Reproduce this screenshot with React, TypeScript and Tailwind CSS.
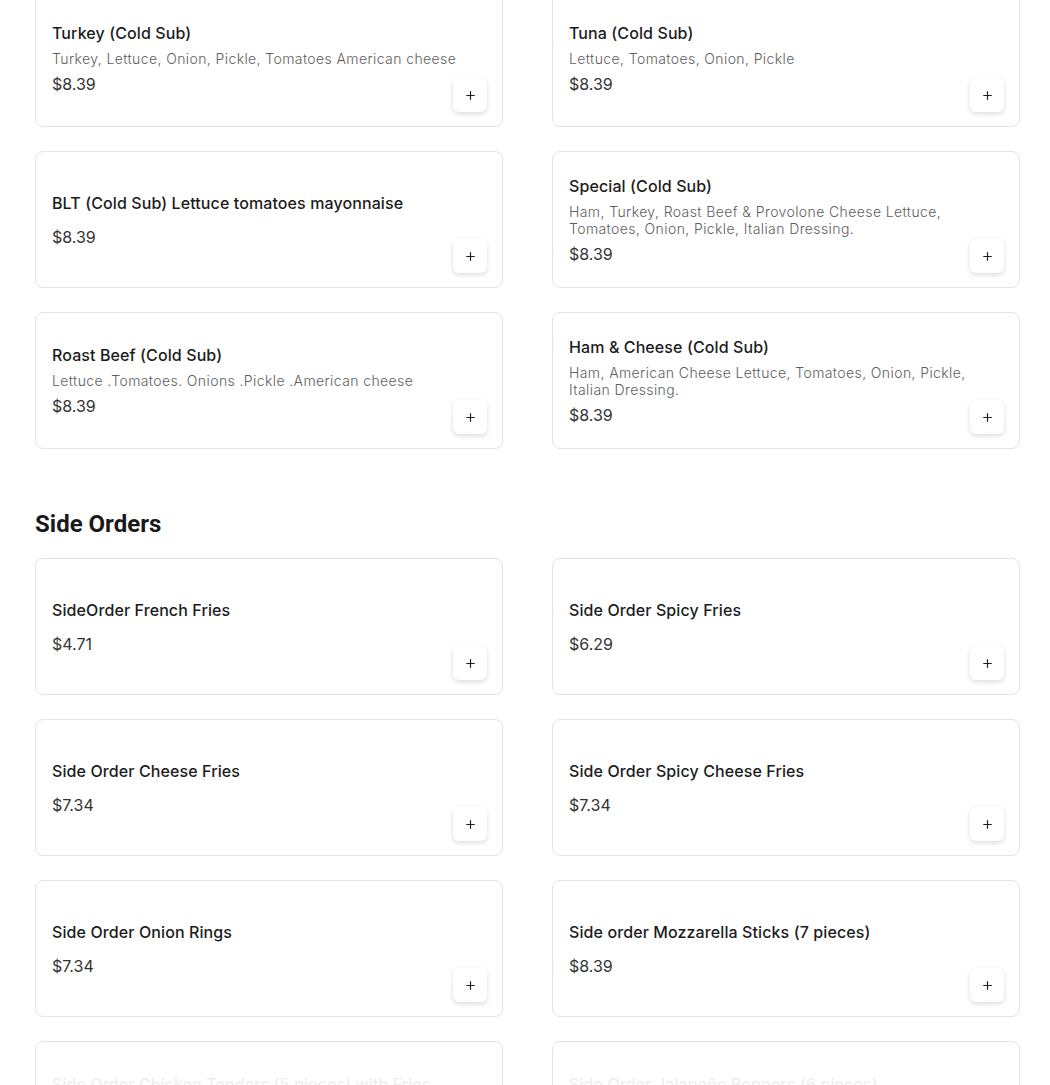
import { Plus } from 'lucide-react';

interface MenuItem {
  name: string;
  description?: string;
  price: string;
}

const subs: MenuItem[] = [
  { name: 'Turkey (Cold Sub)', description: 'Turkey, Lettuce, Onion, Pickle, Tomatoes American cheese', price: '$8.39' },
  { name: 'Tuna (Cold Sub)', description: 'Lettuce, Tomatoes, Onion, Pickle', price: '$8.39' },
  { name: 'BLT (Cold Sub) Lettuce tomatoes mayonnaise', price: '$8.39' },
  {
    name: 'Special (Cold Sub)',
    description: 'Ham, Turkey, Roast Beef & Provolone Cheese Lettuce, Tomatoes, Onion, Pickle, Italian Dressing.',
    price: '$8.39'
  },
  { name: 'Roast Beef (Cold Sub)', description: 'Lettuce .Tomatoes. Onions .Pickle .American cheese', price: '$8.39' },
  {
    name: 'Ham & Cheese (Cold Sub)',
    description: 'Ham, American Cheese Lettuce, Tomatoes, Onion, Pickle, Italian Dressing.',
    price: '$8.39'
  }
];

const sides: MenuItem[] = [
  { name: 'SideOrder French Fries', price: '$4.71' },
  { name: 'Side Order Spicy Fries', price: '$6.29' },
  { name: 'Side Order Cheese Fries', price: '$7.34' },
  { name: 'Side Order Spicy Cheese Fries', price: '$7.34' },
  { name: 'Side Order Onion Rings', price: '$7.34' },
  { name: 'Side order Mozzarella Sticks (7 pieces)', price: '$8.39' },
  { name: 'Side Order Chicken Tenders (5 pieces) with Fries', description: 'Served with your choice of sauce', price: '$9.44' },
  { name: 'Side Order Jalapeño Poppers (6 pieces)', description: 'Served with ranch dressing', price: '$8.39' }
];

function ItemCard({ item, faded }: { item: MenuItem; faded?: boolean }) {
  return (
    <div className="relative flex min-h-[137px] rounded-lg border border-[#e4e4e4] bg-white p-4">
      <div className={`flex flex-1 flex-col justify-center gap-[5px] ${faded ? 'opacity-[0.07]' : ''}`}>
        <div className="text-[16px] leading-6 font-medium tracking-[0.1px] text-[#1c1c1c]">{item.name}</div>
        <div className="text-[14px] leading-[17px] font-light tracking-[0.4px] text-[#5e5e5e]">{item.description}</div>
        <div className="text-[16px] leading-6 text-[#333333]">{item.price}</div>
      </div>
      {/* add-to-cart button sits over the card corner */}
      <button className="absolute right-[15px] bottom-[14px] flex h-[34px] w-[34px] items-center justify-center rounded-md bg-white shadow-[0_2px_5px_rgba(0,0,0,0.14)]">
        <Plus className="h-[13px] w-[13px] text-[#222]" strokeWidth={2.2} />
      </button>
    </div>
  );
}

export default function App() {
  return (
    <div className="h-[1085px] overflow-hidden bg-white font-['Inter',sans-serif]">
      <div className="ml-[35px] -mt-[10px] w-[985px]">
        <div className="grid grid-cols-2 gap-x-[49px] gap-y-[24px]">
          {subs.map((item) => (
            <ItemCard key={item.name} item={item} />
          ))}
        </div>

        <h2 className="mt-[59px] mb-[18px] font-['Roboto',sans-serif] text-[24px] leading-8 font-bold text-[#1a1a1a]">
          Side Orders
        </h2>

        <div className="grid grid-cols-2 gap-x-[49px] gap-y-[24px]">
          {sides.map((item, i) => (
            <ItemCard key={item.name} item={item} faded={i >= 6} />
          ))}
        </div>
      </div>
    </div>
  );
}
